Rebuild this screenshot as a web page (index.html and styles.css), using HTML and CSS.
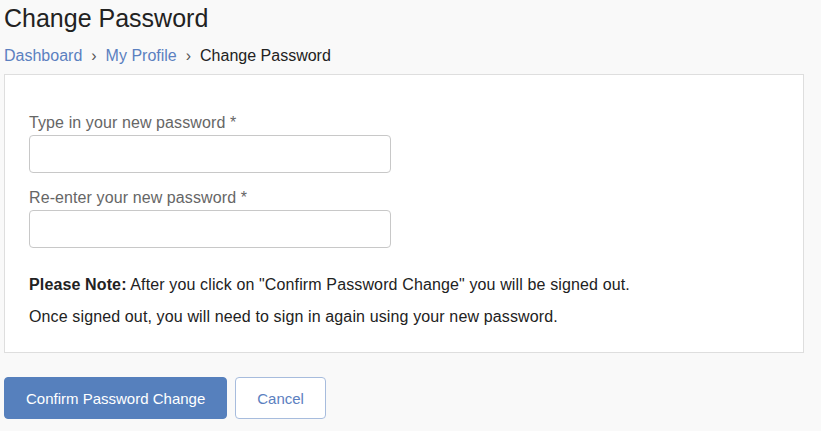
FILE: index.html
```html
<!DOCTYPE html>
<html lang="en">
<head>
<meta charset="utf-8">
<title>Change Password</title>
<link rel="stylesheet" href="styles.css">
</head>
<body>
<div class="page">
  <h1 class="title">Change Password</h1>
  <nav class="crumbs">
    <a href="#" class="crumb-link">Dashboard</a>
    <span class="sep">›</span>
    <a href="#" class="crumb-link">My Profile</a>
    <span class="sep">›</span>
    <span class="crumb-current">Change Password</span>
  </nav>
  <form class="panel">
    <label class="field-label" for="pw1">Type in your new password *</label>
    <input class="field-input" id="pw1" type="password">
    <label class="field-label second" for="pw2">Re-enter your new password *</label>
    <input class="field-input" id="pw2" type="password">
    <p class="note first"><strong>Please Note:</strong> After you click on "Confirm Password Change" you will be signed out.</p>
    <p class="note">Once signed out, you will need to sign in again using your new password.</p>
  </form>
  <div class="actions">
    <button class="btn btn-primary" type="button">Confirm Password Change</button>
    <button class="btn btn-secondary" type="button">Cancel</button>
  </div>
</div>
</body>
</html>
```

FILE: styles.css
```css
html, body {
  margin: 0;
  padding: 0;
  background: #f9f9f9;
}
body {
  font-family: "Liberation Sans", Arial, sans-serif;
  color: #222;
}
.page {
  width: 800px;
  padding: 0 0 0 4px;
}
.title {
  margin: 0;
  font-size: 25px;
  font-weight: normal;
  line-height: 36px;
  color: #222;
}
.crumbs {
  margin-top: 10px;
  font-size: 16px;
  line-height: 20px;
  display: flex;
  gap: 9px;
}
.crumb-link {
  color: #5b80c0;
  text-decoration: none;
}
.sep {
  color: #555;
}
.crumb-current {
  color: #222;
}
.panel {
  margin-top: 8px;
  background: #fff;
  border: 1px solid #dedede;
  padding: 38px 24px 25px;
  display: flex;
  flex-direction: column;
  align-items: flex-start;
}
.field-label {
  font-size: 16px;
  line-height: 20px;
  color: #666;
  margin-bottom: 2px;
  letter-spacing: 0.1px;
}
.field-label.second {
  margin-top: 15px;
}
.field-input {
  width: 362px;
  height: 38px;
  box-sizing: border-box;
  border: 1px solid #c8c8c8;
  border-radius: 4px;
  background: #fff;
  margin: 0;
}
.note {
  margin: 12px 0 0;
  font-size: 16px;
  line-height: 20px;
  color: #222;
  letter-spacing: 0.13px;
}
.note.first {
  margin-top: 27px;
}
.actions {
  margin-top: 24px;
  display: flex;
  gap: 8px;
}
.btn {
  font-family: "Liberation Sans", Arial, sans-serif;
  font-size: 15px;
  height: 42px;
  padding: 0 21px;
  border-radius: 4px;
  border: 1px solid;
  cursor: pointer;
}
.btn-primary {
  background: #5680bd;
  border-color: #5680bd;
  color: #fff;
}
.btn-secondary {
  background: #fff;
  border-color: #a7bcdd;
  color: #5b80c0;
}
```
